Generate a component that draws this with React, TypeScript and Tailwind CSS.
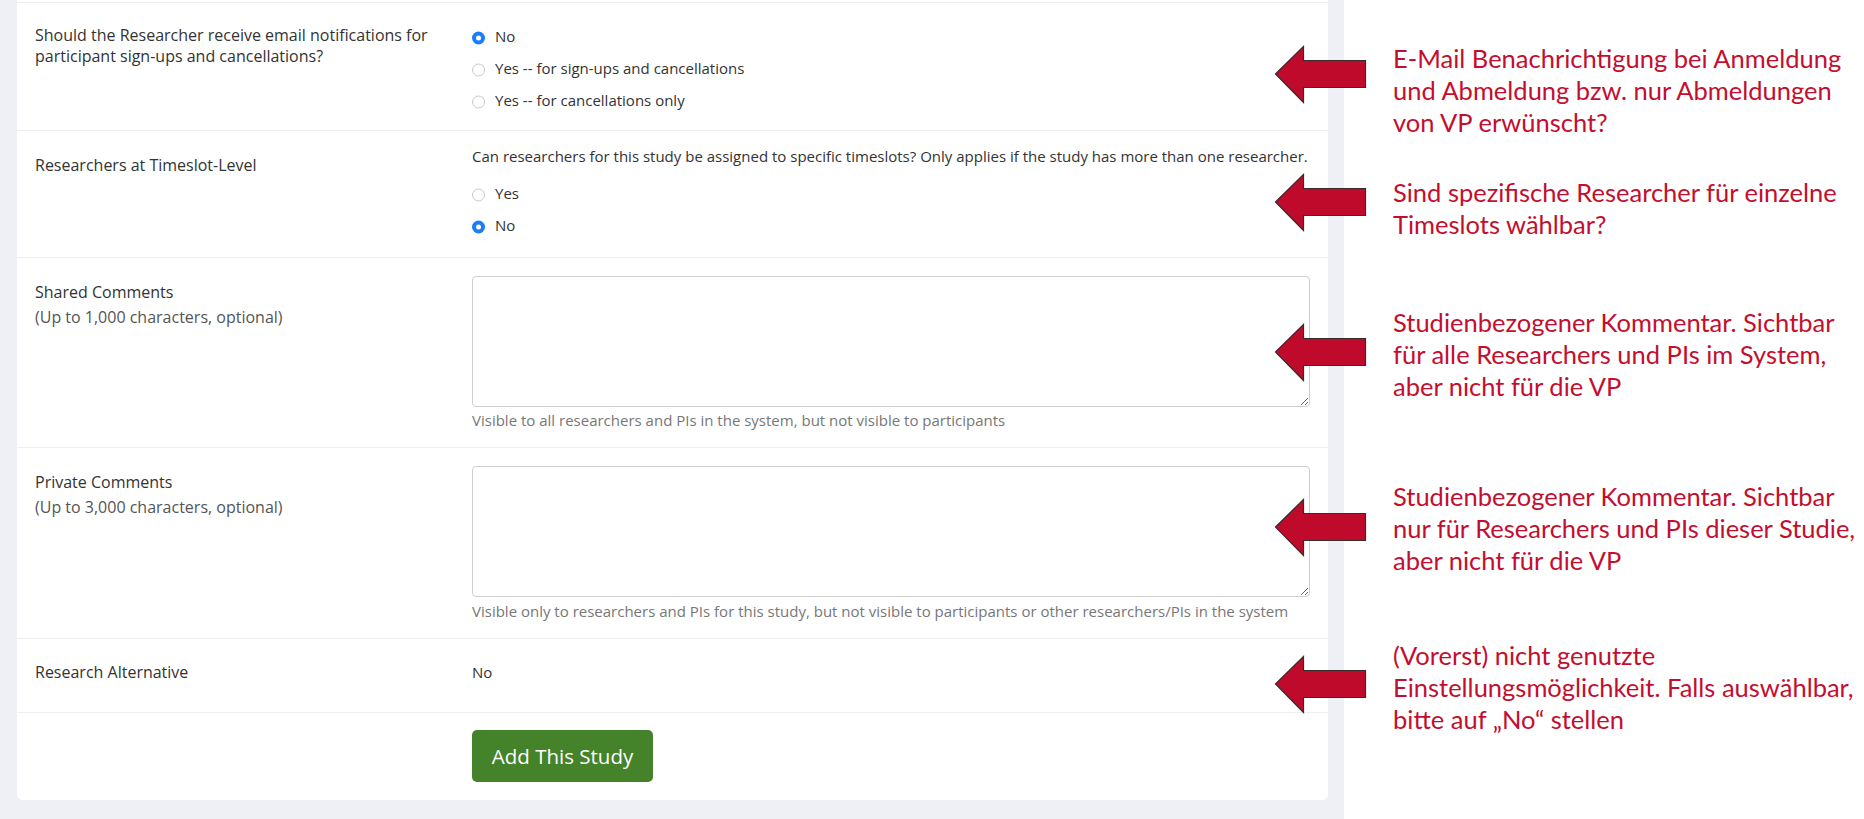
import React from "react";

function Radio({ checked, label }: { checked?: boolean; label: string }) {
  return (
    <div className="flex h-[32px] items-center">
      {checked ? (
        <span className="flex h-[13px] w-[13px] shrink-0 translate-y-[1.5px] items-center justify-center rounded-full bg-[#1b7ef6]">
          <span className="h-[5px] w-[5px] rounded-full bg-white" />
        </span>
      ) : (
        <span className="h-[13px] w-[13px] shrink-0 translate-y-[1.5px] rounded-full border border-[#c9c9c9] bg-white" />
      )}
      <span className="ml-[10px] text-[15px] leading-[20px] text-[#333]">{label}</span>
    </div>
  );
}

function Arrow({ top }: { top: number }) {
  return (
    <svg
      className="absolute left-[1274px]"
      style={{ top: top - 29 }}
      width="94"
      height="60"
      viewBox="0 0 94 60"
    >
      <path
        d="M1.5 29 L29.5 1.5 L29.5 15.5 L91.5 15.5 L91.5 42.5 L29.5 42.5 L29.5 57.5 Z"
        fill="#c00a2c"
        stroke="#3a2a2a"
        strokeWidth="1.2"
        strokeLinejoin="miter"
      />
    </svg>
  );
}

const Row = ({
  className,
  label,
  children,
}: {
  className: string;
  label: React.ReactNode;
  children: React.ReactNode;
}) => (
  <div className={`grid grid-cols-[437px_1fr] border-t border-[#eceef2] px-[18px] ${className}`}>
    <div className="text-[16px] text-[#333]">{label}</div>
    <div>{children}</div>
  </div>
);

export default function App() {
  return (
    <div className="relative flex h-[819px] w-[1864px] overflow-hidden bg-white font-['Open_Sans',sans-serif]">
      <div className="w-[1344px] shrink-0 bg-[#eff0f5] pl-[17px] pr-[16px]">
        <div className="rounded-b-[5px] bg-white pt-[2px] pb-[18px]">
          {/* Row 1 */}
          <Row
            className="pt-[17px] pb-[14px]"
            label={
              <div className="mt-[5px] leading-[21px]">
                Should the Researcher receive email notifications for
                <br />
                participant sign-ups and cancellations?
              </div>
            }
          >
            <Radio checked label="No" />
            <Radio label="Yes -- for sign-ups and cancellations" />
            <Radio label="Yes -- for cancellations only" />
          </Row>

          {/* Row 2 */}
          <Row
            className="pt-[15px] pb-[16px]"
            label={<div className="mt-[9px] leading-[20px]">Researchers at Timeslot-Level</div>}
          >
            <div className="text-[15px] leading-[20px] text-[#333]">
              Can researchers for this study be assigned to specific timeslots? Only applies if the study has more than one researcher.
            </div>
            <div className="mt-[11px]">
              <Radio label="Yes" />
              <Radio checked label="No" />
            </div>
          </Row>

          {/* Row 3 */}
          <Row
            className="pt-[18px] pb-[17px]"
            label={
              <div className="mt-[6px] leading-[20px]">
                <div>Shared Comments</div>
                <div className="mt-[5px] text-[#555]">(Up to 1,000 characters, optional)</div>
              </div>
            }
          >
            <textarea className="block h-[131px] w-full rounded-[4px] border border-[#cfcfcf] bg-white outline-none" />
            <div className="mt-[3px] text-[15px] leading-[20px] text-[#777]">
              Visible to all researchers and PIs in the system, but not visible to participants
            </div>
          </Row>

          {/* Row 4 */}
          <Row
            className="pt-[18px] pb-[17px]"
            label={
              <div className="mt-[6px] leading-[20px]">
                <div>Private Comments</div>
                <div className="mt-[5px] text-[#555]">(Up to 3,000 characters, optional)</div>
              </div>
            }
          >
            <textarea className="block h-[131px] w-full rounded-[4px] border border-[#cfcfcf] bg-white outline-none" />
            <div className="mt-[4px] text-[15px] leading-[20px] text-[#777]">
              Visible only to researchers and PIs for this study, but not visible to participants or other researchers/PIs in the system
            </div>
          </Row>

          {/* Row 5 */}
          <Row
            className="pt-[23px] pb-[30px]"
            label={<div className="leading-[20px]">Research Alternative</div>}
          >
            <div className="text-[15px] leading-[20px] text-[#333]">No</div>
          </Row>

          {/* Row 6 */}
          <Row className="pt-[17px]" label={<div />}>
            <button className="flex h-[52px] w-[181px] items-center justify-center rounded-[5px] bg-[#45832a] text-[20.5px] text-white">
              Add This Study
            </button>
          </Row>
        </div>
      </div>

      <div className="flex-1 pl-[49px] font-['Lato',sans-serif] text-[25.5px] leading-[32px] text-[#c40e2e]">
        <div className="mt-[42px]">
          E-Mail Benachrichtigung bei Anmeldung
          <br />
          und Abmeldung bzw. nur Abmeldungen
          <br />
          von VP erwünscht?
        </div>
        <div className="mt-[38px]">
          Sind spezifische Researcher für einzelne
          <br />
          Timeslots wählbar?
        </div>
        <div className="mt-[66px]">
          Studienbezogener Kommentar. Sichtbar
          <br />
          für alle Researchers und PIs im System,
          <br />
          aber nicht für die VP
        </div>
        <div className="mt-[78px]">
          Studienbezogener Kommentar. Sichtbar
          <br />
          nur für Researchers und PIs dieser Studie,
          <br />
          aber nicht für die VP
        </div>
        <div className="mt-[63px]">
          (Vorerst) nicht genutzte
          <br />
          Einstellungsmöglichkeit. Falls auswählbar,
          <br />
          bitte auf „No“ stellen
        </div>
      </div>

      <Arrow top={74} />
      <Arrow top={202} />
      <Arrow top={352} />
      <Arrow top={527} />
      <Arrow top={684} />
    </div>
  );
}
